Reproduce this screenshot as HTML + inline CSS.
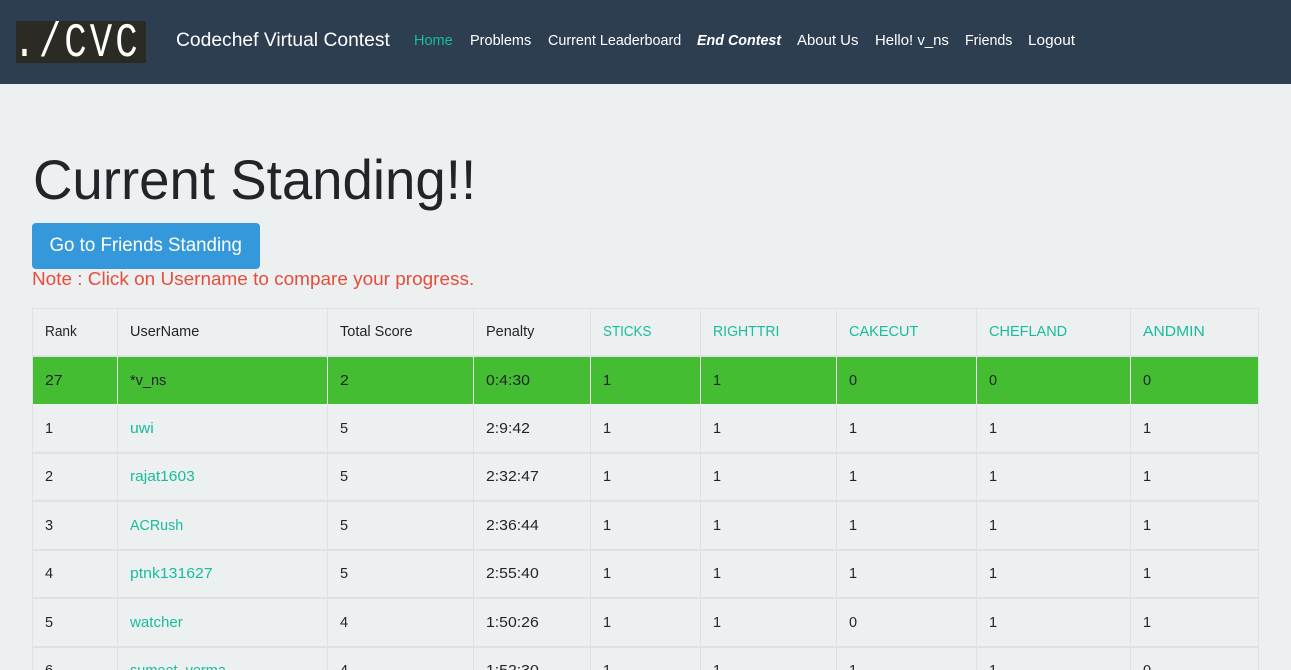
<!DOCTYPE html>
<html><head><meta charset="utf-8"><style>
*{box-sizing:border-box}
html,body{margin:0;padding:0;width:1291px;height:670px;overflow:hidden}
body{background:#ecf0f1;font-family:"Liberation Sans",sans-serif;font-size:14.5px;color:#212529}
.wrap{position:relative;width:1291px;height:670px;overflow:hidden;background:#ecf0f1}
.nav{position:absolute;left:0;top:0;width:1291px;height:84px;background:#2c3e50}
.logo{position:absolute;left:16px;top:21px;width:130px;height:42px;background:#2b2b24;overflow:hidden}
.logo svg{display:block}
.a{position:absolute;white-space:nowrap;line-height:20px;transform-origin:0 0}
.n{top:31px;color:#fff;font-size:14.5px}
h1{position:absolute;left:33px;top:146px;margin:0;font-weight:400;font-size:56px;line-height:68px;color:#212529;white-space:nowrap;transform:scaleX(.975);transform-origin:0 0}
.btn{position:absolute;left:32px;top:223px;width:228px;height:46px;background:#3498db;border-radius:4px;color:#fff;font-size:19px;line-height:46px;text-align:center;white-space:nowrap}
.btn span{display:inline-block;transform:scaleX(.985)}
.note{position:absolute;left:32px;top:268px;font-size:18.5px;line-height:22px;color:#e74c3c;white-space:nowrap;transform:scaleX(1.024);transform-origin:0 0}
table{position:absolute;left:32px;top:308px;width:1227px;table-layout:fixed;border-collapse:separate;border-spacing:0;border-top:1px solid #dee2e6;border-left:1px solid #dee2e6}
td{padding:0 0 0 12px;border-right:1px solid #dee2e6;border-bottom:2px solid #dee2e6;white-space:nowrap;overflow:hidden;vertical-align:middle}
a{color:#18bc9c;text-decoration:none}
.s{display:inline-block;transform-origin:0 50%}
.d{display:inline-block;transform-origin:0 50%;transform:scaleX(1.09)}
tr.g td{background:#44bd32;border-right-color:#ecf0f1;border-bottom-color:#ecf0f1;border-bottom-width:1px}
tr.g td:last-child{border-right-color:#dee2e6}
</style></head><body><div class="wrap">
<div class="nav">
<div class="logo"><svg width="130" height="42"><text transform="translate(-2.7,35) scale(.85,1.1)" font-family="Liberation Mono, monospace" font-size="44" letter-spacing="3.6" fill="#fff">./CVC</text></svg></div>
<div class="a" style="left:176px;top:30px;font-size:19px;color:#fff;line-height:22px;transform:scaleX(1.014)">Codechef Virtual Contest</div>
<div class="a n" style="left:414px;color:#18bc9c">Home</div>
<div class="a n" style="left:470px">Problems</div>
<div class="a n" style="left:548px;transform:scaleX(.99)">Current Leaderboard</div>
<div class="a n" style="left:697px;font-weight:700;font-style:italic;transform:scaleX(.985)">End Contest</div>
<div class="a n" style="left:797px;transform:scaleX(1.03)">About Us</div>
<div class="a n" style="left:875px;transform:scaleX(1.03)">Hello! v_ns</div>
<div class="a n" style="left:965px;transform:scaleX(.98)">Friends</div>
<div class="a n" style="left:1028px;transform:scaleX(1.06)">Logout</div>
</div>
<h1>Current Standing!!</h1>
<div class="btn"><span>Go to Friends Standing</span></div>
<div class="note">Note : Click on Username to compare your progress.</div>
<table>
<colgroup><col style="width:85px"><col style="width:210px"><col style="width:146px"><col style="width:117px"><col style="width:110px"><col style="width:136px"><col style="width:140px"><col style="width:154px"><col style="width:128px"></colgroup>
<tr style="height:48px"><td><span class="s" style="transform:scaleX(.94)">Rank</span></td><td>UserName</td><td>Total Score</td><td>Penalty</td><td><a class="s" style="transform:scaleX(.925)">STICKS</a></td><td><a class="s" style="transform:scaleX(.97)">RIGHTTRI</a></td><td><a>CAKECUT</a></td><td><a>CHEFLAND</a></td><td><a class="s" style="transform:scaleX(1.08)">ANDMIN</a></td></tr>
<tr class="g" style="height:48px"><td><span class="d">27</span></td><td>*v_ns</td><td><span class="d">2</span></td><td><span class="d">0:4:30</span></td><td>1</td><td>1</td><td>0</td><td>0</td><td>0</td></tr>
<tr style="height:49px"><td>1</td><td><a class="s" style="transform:scaleX(1.09)">uwi</a></td><td>5</td><td><span class="d">2:9:42</span></td><td>1</td><td>1</td><td>1</td><td>1</td><td>1</td></tr>
<tr style="height:48px"><td>2</td><td><a class="s" style="transform:scaleX(1.07)">rajat1603</a></td><td>5</td><td><span class="d">2:32:47</span></td><td>1</td><td>1</td><td>1</td><td>1</td><td>1</td></tr>
<tr style="height:49px"><td>3</td><td><a class="s" style="transform:scaleX(.985)">ACRush</a></td><td>5</td><td><span class="d">2:36:44</span></td><td>1</td><td>1</td><td>1</td><td>1</td><td>1</td></tr>
<tr style="height:48px"><td>4</td><td><a class="d">ptnk131627</a></td><td>5</td><td><span class="d">2:55:40</span></td><td>1</td><td>1</td><td>1</td><td>1</td><td>1</td></tr>
<tr style="height:49px"><td>5</td><td><a class="s" style="transform:scaleX(1.04)">watcher</a></td><td>4</td><td><span class="d">1:50:26</span></td><td>1</td><td>1</td><td>0</td><td>1</td><td>1</td></tr>
<tr style="height:48px"><td>6</td><td><a>sumeet_verma</a></td><td>4</td><td><span class="d">1:52:30</span></td><td>1</td><td>1</td><td>1</td><td>1</td><td>0</td></tr>
</table>
</div></body></html>
